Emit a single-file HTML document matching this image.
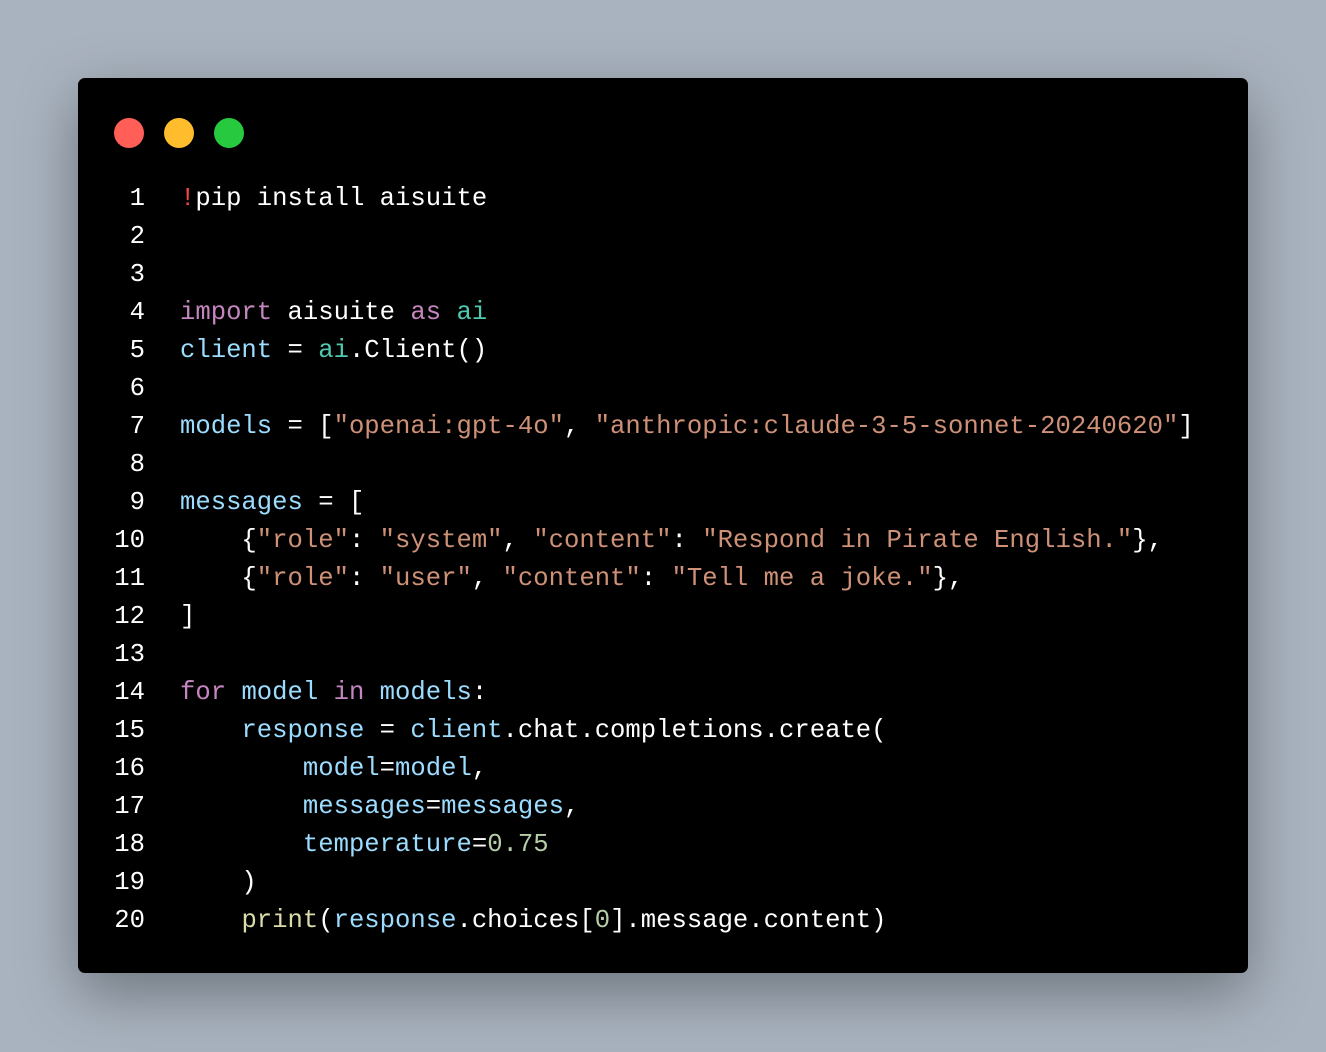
<!DOCTYPE html>
<html><head><meta charset="utf-8"><style>
html,body{margin:0;padding:0;}
body{width:1326px;height:1052px;background:#a9b3bf;position:relative;overflow:hidden;font-family:"Liberation Mono",monospace;}
.win{position:absolute;left:78px;top:78px;width:1170px;height:895px;background:#000;border-radius:7px;box-shadow:0 20px 60px rgba(0,0,0,0.35);}
.dot{position:absolute;top:40px;width:30px;height:30px;border-radius:50%;}
.code{position:absolute;left:0;top:102px;font-size:25.6px;line-height:38px;color:#fff;white-space:pre;}
.ln{position:absolute;left:0;width:67px;text-align:right;color:#fff;}
.tx{position:absolute;left:102px;}
.k{color:#c586c0}.v{color:#9cdcfe}.c{color:#4ec9b0}.s{color:#ce9178}.n{color:#b5cea8}.f{color:#dcdcaa}.r{color:#f44747}
</style></head><body>
<div class="win">
<div class="dot" style="left:36px;background:#ff5f56"></div>
<div class="dot" style="left:86px;background:#ffbd2e"></div>
<div class="dot" style="left:136px;background:#27c93f"></div>
<div class="code">
<div class="ln" style="top:0">1</div><div class="tx" style="top:0"><span class="r">!</span>pip install aisuite</div>
<div class="ln" style="top:38px">2</div>
<div class="ln" style="top:76px">3</div>
<div class="ln" style="top:114px">4</div><div class="tx" style="top:114px"><span class="k">import</span> aisuite <span class="k">as</span> <span class="c">ai</span></div>
<div class="ln" style="top:152px">5</div><div class="tx" style="top:152px"><span class="v">client</span> = <span class="c">ai</span>.Client()</div>
<div class="ln" style="top:190px">6</div>
<div class="ln" style="top:228px">7</div><div class="tx" style="top:228px"><span class="v">models</span> = [<span class="s">"openai:gpt-4o"</span>, <span class="s">"anthropic:claude-3-5-sonnet-20240620"</span>]</div>
<div class="ln" style="top:266px">8</div>
<div class="ln" style="top:304px">9</div><div class="tx" style="top:304px"><span class="v">messages</span> = [</div>
<div class="ln" style="top:342px">10</div><div class="tx" style="top:342px">    {<span class="s">"role"</span>: <span class="s">"system"</span>, <span class="s">"content"</span>: <span class="s">"Respond in Pirate English."</span>},</div>
<div class="ln" style="top:380px">11</div><div class="tx" style="top:380px">    {<span class="s">"role"</span>: <span class="s">"user"</span>, <span class="s">"content"</span>: <span class="s">"Tell me a joke."</span>},</div>
<div class="ln" style="top:418px">12</div><div class="tx" style="top:418px">]</div>
<div class="ln" style="top:456px">13</div>
<div class="ln" style="top:494px">14</div><div class="tx" style="top:494px"><span class="k">for</span> <span class="v">model</span> <span class="k">in</span> <span class="v">models</span>:</div>
<div class="ln" style="top:532px">15</div><div class="tx" style="top:532px">    <span class="v">response</span> = <span class="v">client</span>.chat.completions.create(</div>
<div class="ln" style="top:570px">16</div><div class="tx" style="top:570px">        <span class="v">model</span>=<span class="v">model</span>,</div>
<div class="ln" style="top:608px">17</div><div class="tx" style="top:608px">        <span class="v">messages</span>=<span class="v">messages</span>,</div>
<div class="ln" style="top:646px">18</div><div class="tx" style="top:646px">        <span class="v">temperature</span>=<span class="n">0.75</span></div>
<div class="ln" style="top:684px">19</div><div class="tx" style="top:684px">    )</div>
<div class="ln" style="top:722px">20</div><div class="tx" style="top:722px">    <span class="f">print</span>(<span class="v">response</span>.choices[<span class="n">0</span>].message.content)</div>
</div>
</div>
</body></html>
